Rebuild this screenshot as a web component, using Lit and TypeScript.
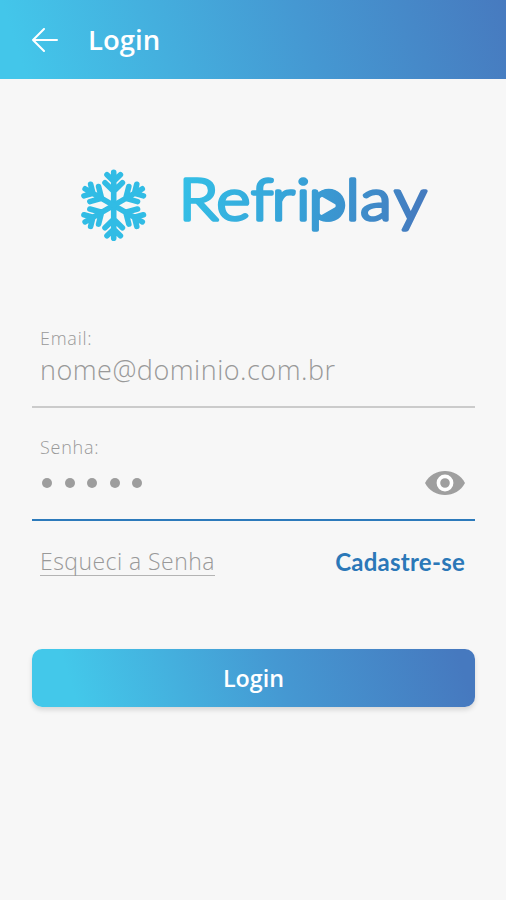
import { LitElement, html, svg, css } from "lit";
import { customElement } from "lit/decorators.js";

const FLAKE_ANGLES = [0, 60, 120, 180, 240, 300];

@customElement("brand-logo")
class BrandLogo extends LitElement {
  static styles = css`
    :host { display: block; height: 80px; }
    svg { display: block; overflow: visible; }
    .flake { fill: none; stroke: #31bce5; stroke-width: 5.6; stroke-linecap: round; stroke-linejoin: round; }
    .word {
      font-family: "Lato", sans-serif; font-weight: 300; font-size: 58px;
      fill: url(#ink); stroke: url(#ink); stroke-width: 3.6; stroke-linejoin: round; stroke-linecap: round;
    }
    .play { fill: url(#ink); fill-rule: evenodd; }
  `;
  render() {
    return html`<svg width="360" height="80" viewBox="0 0 360 80">
      <defs>
        <linearGradient id="ink" gradientUnits="userSpaceOnUse" x1="96" y1="20" x2="316" y2="60">
          <stop offset="0" stop-color="#34bfe6" />
          <stop offset="0.5" stop-color="#379fd6" />
          <stop offset="1" stop-color="#4678bd" />
        </linearGradient>
      </defs>
      <g class="flake" transform="translate(39.7 40.3)">
        ${FLAKE_ANGLES.map((a) => svg`<path transform="rotate(${a})" d="M0 0V-33M-6.7 -30.5L0 -24L6.7 -30.5M-8.7 -22.5L0 -14L8.7 -22.5" />`)}
      </g>
      <g transform="scale(1.12 1)">
        <text class="word" y="55.3" x="93.5 127.3 158 176.5 198.2 209.3 242.4 255.5 286">Refriplay</text>
        <path class="play" d="M212.8 40.3a14.7 16.5 0 1 1 29.4 0a14.7 16.5 0 1 1 -29.4 0ZM219.5 30.5V51L235.5 40.7Z" />
      </g>
    </svg>`;
  }
}

@customElement("app-root")
class AppRoot extends LitElement {
  static styles = css`
    :host {
      display: flex; flex-direction: column; height: 900px; background: #f7f7f7;
      font-family: "Open Sans", sans-serif; color: #999;
    }
    * { box-sizing: border-box; }
    header {
      height: 79px; flex: none; padding: 1px 0 0 32px; display: flex; align-items: center; gap: 30px;
      background: linear-gradient(72deg, #43c6ea 5%, #4598d2 60%, #477abf 100%); color: #fff;
    }
    .back { width: 26px; height: 24px; fill: none; stroke: #fff; stroke-width: 2; stroke-linecap: round; stroke-linejoin: round; }
    h1 { margin: 0; font-size: 27.5px; line-height: 36px; font-weight: 600; }
    brand-logo { margin: 86px 0 0 74px; }
    form { display: flex; flex-direction: column; margin: 82px 31px 0 32px; }
    .field { display: flex; flex-direction: column; padding: 0 8px; border-bottom: 2px solid #cbcbcb; }
    .email { height: 81px; }
    .senha { height: 113px; padding-top: 28px; border-bottom-color: #2c7abb; }
    .label { font-size: 18px; line-height: 22px; font-weight: 300; letter-spacing: 0.75px; }
    .value { font-size: 27px; line-height: 34px; font-weight: 300; margin-top: 4px; letter-spacing: 0.5px; }
    .secret { display: flex; justify-content: space-between; align-items: center; height: 26px; margin: 12px 2px 0 2px; }
    .dots { display: flex; gap: 12.5px; }
    .dot { width: 10px; height: 10px; border-radius: 50%; background: #9d9d9d; }
    .eye { width: 40px; height: 24px; }
    .links { display: flex; justify-content: space-between; align-items: flex-start; padding: 25px 10px 0 8px; height: 128px; line-height: 32px; font-size: 23px; }
    .forgot { font-weight: 300; line-height: 28px; margin-top: 1px; border-bottom: 1.5px solid #b4b4b4; height: 29px; letter-spacing: 0.45px; }
    .signup { font-weight: 700; color: #2b78b8; font-family: "Lato", sans-serif; font-size: 24px; letter-spacing: 0.25px; }
    .submit {
      height: 58px; border: 0; padding: 0; border-radius: 10px; color: #fff; font: 600 23.3px/56px "Open Sans", sans-serif;
      background: linear-gradient(72deg, #43c8ea 10%, #4598d2 56%, #4679bf 96%); box-shadow: 0 3px 5px rgba(0, 0, 0, 0.13);
    }
  `;
  render() {
    return html`
      <header>
        <svg class="back" viewBox="0 0 26 24"><path d="M25 12H1M12 1L1 12L12 23" /></svg>
        <h1><span class="title">Login</span></h1>
      </header>
      <brand-logo></brand-logo>
      <form>
        <div class="field email">
          <span class="label">Email:</span>
          <span class="value">nome@dominio.com.br</span>
        </div>
        <div class="field senha">
          <span class="label">Senha:</span>
          <div class="secret">
            <div class="dots">${[0, 1, 2, 3, 4].map(() => html`<span class="dot"></span>`)}</div>
            <svg class="eye" viewBox="0 0 40 24">
              <path fill="#9f9f9f" d="M0 12C4 4 12 0 20 0S36 4 40 12C36 20 28 24 20 24S4 20 0 12Z" />
              <circle cx="20" cy="12" r="6.6" fill="#9f9f9f" stroke="#fff" stroke-width="3.6" />
            </svg>
          </div>
        </div>
        <div class="links">
          <span class="forgot">Esqueci a Senha</span>
          <span class="signup">Cadastre-se</span>
        </div>
        <button class="submit" type="button">Login</button>
      </form>
    `;
  }
}
